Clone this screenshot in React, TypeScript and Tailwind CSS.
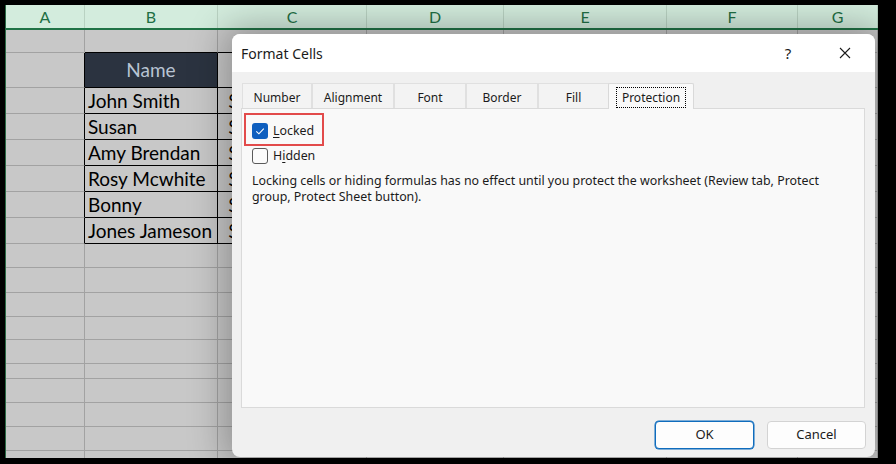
import React from "react";

const COLS = [79, 133, 149, 137, 163, 131, 80];
const LETTERS = ["A", "B", "C", "D", "E", "F", "G"];
const colW = ["w-[79px]", "w-[133px]", "w-[149px]", "w-[137px]", "w-[163px]", "w-[131px]", "w-[80px]"];

type Row = { h: string; kind: "empty" | "top" | "name" | "data"; text?: string };

const rows: Row[] = [
  { h: "h-[23px]", kind: "top" },
  { h: "h-[35px]", kind: "name" },
  { h: "h-[26px]", kind: "data", text: "John Smith" },
  { h: "h-[26px]", kind: "data", text: "Susan" },
  { h: "h-[26px]", kind: "data", text: "Amy Brendan" },
  { h: "h-[26px]", kind: "data", text: "Rosy Mcwhite" },
  { h: "h-[26px]", kind: "data", text: "Bonny" },
  { h: "h-[26px]", kind: "data", text: "Jones Jameson" },
  { h: "h-[24px]", kind: "empty" },
  { h: "h-[25px]", kind: "empty" },
  { h: "h-[24px]", kind: "empty" },
  { h: "h-[23px]", kind: "empty" },
  { h: "h-[24px]", kind: "empty" },
  { h: "h-[15px]", kind: "empty" },
  { h: "h-[24px]", kind: "empty" },
  { h: "h-[24px]", kind: "empty" },
  { h: "h-[24px]", kind: "empty" },
  { h: "h-[24px]", kind: "empty" },
];

function SheetRow({ row }: { row: Row }) {
  const boxed = row.kind === "name" || row.kind === "data";
  return (
    <div className={`flex ${row.h}`}>
      {COLS.map((_, i) => {
        let cls = `${colW[i]} h-full shrink-0 border-r border-b border-[#a2a2a2]`;
        if (i === 0 && boxed) cls = `${colW[i]} h-full shrink-0 border-b border-[#a2a2a2] border-r-[1px] border-r-black`;
        if ((i === 1 || i === 2) && boxed) cls = `${colW[i]} h-full shrink-0 border-r border-b border-black`;
        if ((i === 1 || i === 2) && row.kind === "top") cls = `${colW[i]} h-full shrink-0 border-r border-r-[#a2a2a2] border-b border-b-black`;
        if (i === 1 && row.kind === "name") {
          return (
            <div key={i} className={`${cls} bg-[#2b3340] flex items-center justify-center pt-[1px] text-[19px] text-[#b9c4d3]`}>
              Name
            </div>
          );
        }
        if (i === 1 && row.kind === "data") {
          return (
            <div key={i} className={`${cls} flex items-center pl-[3px] pt-[1px] text-[19px] text-black whitespace-nowrap`}>
              {row.text}
            </div>
          );
        }
        if (i === 2 && row.kind === "data") {
          return (
            <div key={i} className={`${cls} flex items-center pl-[10px] pt-[1px] text-[19px] text-black`}>
              $
            </div>
          );
        }
        return <div key={i} className={cls} />;
      })}
    </div>
  );
}

const tabs = [
  { label: "Number", w: "w-[70px]" },
  { label: "Alignment", w: "w-[82px]" },
  { label: "Font", w: "w-[72px]" },
  { label: "Border", w: "w-[72px]" },
  { label: "Fill", w: "w-[71px]" },
];

export default function App() {
  return (
    <div className="relative w-[896px] h-[464px] bg-black overflow-hidden" style={{ fontFamily: "Lato, 'Noto Sans', sans-serif" }}>
      <div className="absolute left-[5px] top-[5px] w-[873px] h-[453px] overflow-hidden bg-[#c8c8c8] border-l border-l-[#2a6a45]">
        {/* column header */}
        <div className="flex h-[25px] bg-[#d3ecdd] border-b-2 border-b-[#217346]">
          {COLS.map((_, i) => (
            <div
              key={i}
              className={`${colW[i]} shrink-0 h-full flex items-center justify-center border-r border-[#b9d2c2] text-[16px] text-[#1f6f44]`}
            >
              {LETTERS[i]}
            </div>
          ))}
        </div>
        {rows.map((r, i) => (
          <SheetRow key={i} row={r} />
        ))}
      </div>

      {/* Dialog */}
      <div
        className="absolute left-[232px] top-[34px] w-[643px] h-[423px] rounded-[8px] bg-[#f0f0f0] overflow-hidden flex flex-col shadow-[0_0_36px_8px_rgba(0,0,0,0.28)] text-[#1b1b1b]"
        style={{ fontFamily: "'Noto Sans', sans-serif" }}
      >
        {/* title bar */}
        <div className="h-[38px] bg-white flex items-center shrink-0">
          <div className="pl-[9px] text-[14px]">Format Cells</div>
          <div className="ml-auto flex items-center">
            <div className="w-[30px] text-center text-[15px] leading-none">?</div>
            <div className="w-[30px] ml-[27px] flex justify-center">
              <svg width="12" height="12" viewBox="0 0 12 12">
                <path d="M1 1 L11 11 M11 1 L1 11" stroke="#1b1b1b" strokeWidth="1.1" fill="none" />
              </svg>
            </div>
            <div className="w-[15px]" />
          </div>
        </div>

        {/* tabs */}
        <div className="flex items-end pl-[10px] mt-[10px] h-[26px] shrink-0 text-[12px]">
          {tabs.map((t) => (
            <div
              key={t.label}
              className={`${t.w} h-[25px] pt-[3px] flex items-center justify-center border border-b-0 border-[#e0e0e0] bg-[#f3f3f3]`}
            >
              {t.label}
            </div>
          ))}
          <div className="w-[86px] -ml-[1px] h-[26px] relative -mb-[1px] z-10 flex items-center justify-center border border-b-0 border-[#d9d9d9] bg-[#f9f9f9] rounded-t-[2px]">
            <div className="border border-dotted border-black px-[5px] h-[21px] mt-[2px] pt-[1px] flex items-center">Protection</div>
          </div>
        </div>

        {/* panel */}
        <div className="relative ml-[9px] mr-[10px] h-[300px] shrink-0 bg-[#f9f9f9] border border-[#dadada] pl-[10px] pt-[14px] text-[12.4px]">
          <div className="absolute left-[2px] top-[4px] w-[80px] h-[33px] border-2 border-[#e24b4b]" />
          <div className="flex items-center h-[16px]">
            <div className="w-[16px] h-[16px] rounded-[3px] bg-[#0f5fbf] flex items-center justify-center">
              <svg width="16" height="16" viewBox="0 0 16 16">
                <path d="M4.3 8.3 L6.9 10.8 L11.8 5.6" stroke="white" strokeWidth="1.1" fill="none" />
              </svg>
            </div>
            <span className="ml-[5px]">
              <span className="underline underline-offset-2">L</span>ocked
            </span>
          </div>
          <div className="flex items-center h-[16px] mt-[9px]">
            <div className="w-[16px] h-[16px] rounded-[3px] border border-[#5a5a5a] bg-[#fbfbfb]" />
            <span className="ml-[5px]">
              H<span className="underline underline-offset-2">i</span>dden
            </span>
          </div>
          <div className="mt-[9px] leading-[16px] whitespace-nowrap">
            <div>Locking cells or hiding formulas has no effect until you protect the worksheet (Review tab, Protect</div>
            <div>group, Protect Sheet button).</div>
          </div>
        </div>

        {/* buttons */}
        <div className="flex justify-end gap-[13px] pr-[9px] mt-[13px] text-[13px]">
          <button className="w-[99px] h-[28px] rounded-[4px] border border-[#0f6cbd] bg-[#fdfdfd] ring-[0.5px] ring-[#0f6cbd]">OK</button>
          <button className="w-[99px] h-[28px] rounded-[4px] border border-[#d3d3d3] bg-[#fdfdfd]">Cancel</button>
        </div>
      </div>
    </div>
  );
}
